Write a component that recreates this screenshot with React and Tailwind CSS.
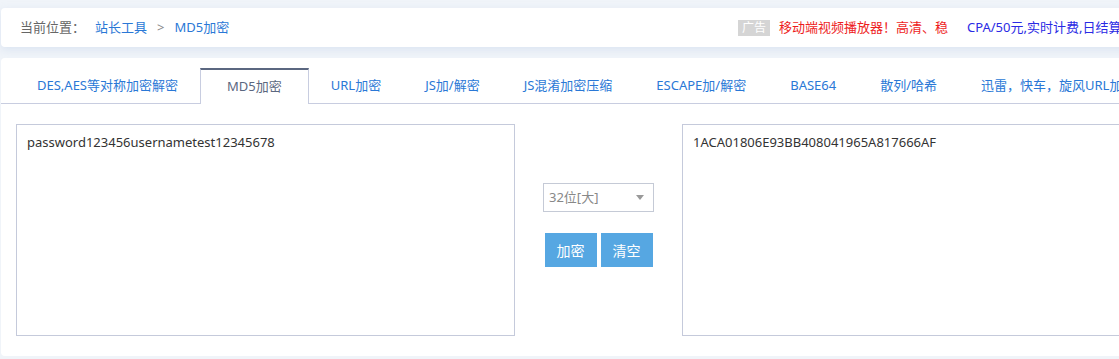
import React from 'react';

const tabs = [
  'DES,AES等对称加密解密',
  'MD5加密',
  'URL加密',
  'JS加/解密',
  'JS混淆加密压缩',
  'ESCAPE加/解密',
  'BASE64',
  '散列/哈希',
  '迅雷，快车，旋风URL加密',
];

const Breadcrumb = () => (
  <div className="w-[718px] shrink-0 flex items-center text-[13px]">
    <span className="text-[#666] mr-[10px]">当前位置：</span>
    <span className="text-[#2a78d6]">站长工具</span>
    <span className="text-[#888] mx-[10px]">&gt;</span>
    <span className="text-[#2a78d6]">MD5加密</span>
  </div>
);

const Ads = () => (
  <div className="flex items-center text-[13px] whitespace-nowrap">
    <span className="bg-[#d5d5d5] text-white text-[12px] leading-[16px] px-[4px] mr-[9px]">广告</span>
    <span className="text-[#ee1d1d] mr-[19px]">移动端视频播放器！高清、稳</span>
    <span className="text-[#2a2ae4]">CPA/50元,实时计费,日结算</span>
  </div>
);

const TabBar = ({ active }) => (
  <ul className="flex h-[36px] pl-[14px] border-b border-[#c8cde0]">
    {tabs.map((t, i) =>
      i === active ? (
        <li
          key={t}
          className="h-[36px] shrink-0 flex items-center px-[26px] bg-white border-x border-t-2 border-x-[#c8cde0] border-t-[#5b6780] text-[#5b6780] text-[13px] whitespace-nowrap"
        >
          {t}
        </li>
      ) : (
        <li
          key={t}
          className="h-[35px] shrink-0 flex items-center px-[22px] text-[#2a78d6] text-[13px] whitespace-nowrap"
        >
          {t}
        </li>
      )
    )}
  </ul>
);

const Box = ({ value }) => (
  <textarea
    readOnly
    value={value}
    className="w-[499px] h-[212px] shrink-0 resize-none border border-[#c5cadb] px-[10px] pt-[8px] pb-[10px] text-[13px] leading-[18px] text-[#333] outline-none"
  />
);

export default function App() {
  return (
    <div className="w-[1119px] h-[359px] overflow-hidden bg-[#f0f4f9] pt-[8px] pl-[1px] font-['Microsoft_YaHei','Noto_Sans','Noto_Sans_CJK_SC',sans-serif]">
      <div className="w-[1300px]">
        <div className="h-[39px] bg-white rounded-[4px] flex items-center pl-[19px] shadow-[0_3px_8px_rgba(180,200,230,0.35)]">
          <Breadcrumb />
          <Ads />
        </div>

        <div className="mt-[11px] h-[298px] bg-white rounded-[4px] pt-[10px]">
          <TabBar active={1} />

          <div className="flex mt-[20px] pl-[15px]">
            <Box value="password123456usernametest12345678" />

            <div className="w-[167px] shrink-0 flex flex-col items-center pt-[59px]">
              <div className="w-[111px] h-[29px] border border-[#c5cad6] flex items-center justify-between pl-[5px] pr-[9px] text-[13px] text-[#888]">
                <span>32位[大]</span>
                <svg width="8" height="5" viewBox="0 0 8 5">
                  <path d="M0 0 H8 L4 5 Z" fill="#999" />
                </svg>
              </div>
              <div className="flex gap-[4px] mt-[21px]">
                <button className="w-[52px] h-[34px] bg-[#56a7e2] text-white text-[14px]">加密</button>
                <button className="w-[52px] h-[34px] bg-[#56a7e2] text-white text-[14px]">清空</button>
              </div>
            </div>

            <Box value="1ACA01806E93BB408041965A817666AF" />
          </div>
        </div>
      </div>
    </div>
  );
}
